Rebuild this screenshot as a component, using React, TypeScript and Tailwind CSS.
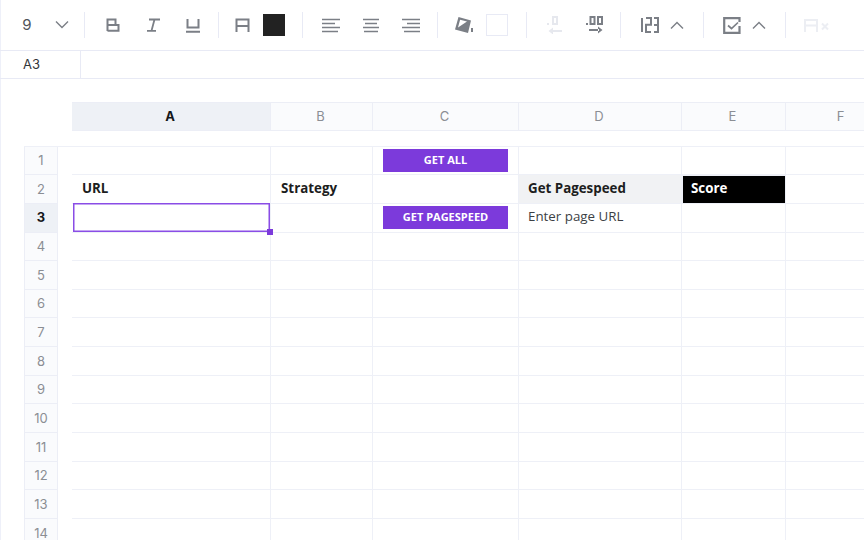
import type { ReactNode } from 'react';

const columns = [
  { name: 'A', width: 'w-[199px]' },
  { name: 'B', width: 'w-[102px]' },
  { name: 'C', width: 'w-[146px]' },
  { name: 'D', width: 'w-[163px]' },
  { name: 'E', width: 'w-[104px]' },
  { name: 'F', width: 'w-[112px]' },
];

const rows = Array.from({ length: 14 }, (_, i) => i + 1);

function Icon({ children, w = 18, h = 18, className = 'text-[#7b7f86]' }: { children: ReactNode; w?: number; h?: number; className?: string }) {
  return (
    <svg width={w} height={h} viewBox={`0 0 ${w} ${h}`} fill="none" stroke="currentColor" strokeWidth="2" className={className}>
      {children}
    </svg>
  );
}

function Divider({ left }: { left: string }) {
  return <div className={`h-[26px] w-px bg-[#e8eaf5] ${left}`} />;
}

function Tool({ children, width = 'w-10' }: { children: ReactNode; width?: string }) {
  return <div className={`flex h-6 items-center justify-center ${width}`}>{children}</div>;
}

function Chevron({ up = false }: { up?: boolean }) {
  return (
    <Icon w={14} h={8} className="text-[#7b7f86]">
      <path d={up ? 'M1 7.500 7 1.500l6 6' : 'M1 .5l6 6 6-6'} strokeWidth="1.400" />
    </Icon>
  );
}

function Toolbar() {
  return (
    <div className="flex h-[51px] items-center border-b border-[#e8eaf5] font-['Inter',sans-serif]">
      <div className="w-[54px] text-center text-[15px] text-[#50545a]">9</div>
      <Tool width="w-4"><Chevron /></Tool>
      <Divider left="ml-[14px]" />
      <Tool width="ml-2 w-10">
        <Icon w={14} h={14}><path d="M1.500 13V1.500h8v5.500M1.500 7h11v5.800H1.500" /></Icon>
      </Tool>
      <Tool>
        <Icon w={15} h={14}><path d="M3 1.500h11M1 12.800h9M8.500 1.500 5.500 12.800" strokeWidth="1.800" /></Icon>
      </Tool>
      <Tool>
        <Icon w={14} h={15}><path d="M1.500 1v8.500h11V1M0 13.800h14" /></Icon>
      </Tool>
      <Divider left="ml-[5px]" />
      <Tool width="ml-[3px] w-10">
        <Icon w={15} h={14}><path d="M1.500 14V1.500h12V14M1.500 8h12" /></Icon>
      </Tool>
      <div className="ml-px h-[22px] w-[22px] bg-[#222222]" />
      <Divider left="ml-[17px]" />
      <Tool width="ml-[8px] w-10">
        <Icon w={18} h={15}><path d="M0 1.500h18M0 5.500h13M0 9.500h18M0 13.500h16" strokeWidth="1.700" /></Icon>
      </Tool>
      <Tool>
        <Icon w={18} h={15}><path d="M1 1.500h16M3 5.500h12M1 9.500h16M2 13.500h14" strokeWidth="1.700" /></Icon>
      </Tool>
      <Tool>
        <Icon w={18} h={15}><path d="M0 1.500h18M5 5.500h13M0 9.500h18M2 13.500h16" strokeWidth="1.700" /></Icon>
      </Tool>
      <Divider left="ml-[6px]" />
      <Tool width="ml-[6px] w-10">
        <svg width="19" height="17" viewBox="0 0 19 17" className="text-[#7b7f86]" fill="currentColor">
          <path fillRule="evenodd" d="M3.500 0 16 3.500 13 16 0 12.500 3.500 0Zm1.600 2.800L3 10.600l9-6-6.900-1.800Z" />
          <rect x="16" y="11" width="2" height="4" />
        </svg>
      </Tool>
      <div className="ml-[2px] h-[22px] w-[22px] border border-[#e8eaf5] bg-white" />
      <Divider left="ml-[18px]" />
      <Tool width="ml-[8px] w-10">
        <svg width="18" height="18" viewBox="0 0 18 18" className="text-[#e6e8ee]" fill="currentColor">
          <rect x="1" y="7" width="2" height="2" />
          <path fillRule="evenodd" d="M6 0h6v9H6V0Zm2 2v5h2V2H8Z" />
          <path d="M4 14h12v2H4zM7 11.500v7L2.500 15 7 11.500Z" />
        </svg>
      </Tool>
      <Tool>
        <svg width="18" height="18" viewBox="0 0 18 18" className="text-[#7b7f86]" fill="currentColor">
          <rect x="0" y="7" width="2" height="2" />
          <path fillRule="evenodd" d="M3.500 0h6v9h-6V0Zm2 2v5h2V2h-2ZM11 0h6v9h-6V0Zm2 2v5h2V2h-2Z" />
          <path d="M3 13h10v2H3zM12 10.500v7l4.500-3.500-4.500-3.500Z" />
        </svg>
      </Tool>
      <Divider left="ml-[5px]" />
      <Tool width="ml-[9px] w-10">
        <Icon w={18} h={16}>
          <path d="M1 1v14M5 1h5v6.800H5V15h5M13 1h4v14h-4M13 8h4" strokeWidth="2" />
        </Icon>
      </Tool>
      <Tool width="w-[14px]"><Chevron up /></Tool>
      <Divider left="ml-[19px]" />
      <Tool width="ml-[8px] w-10">
        <Icon w={18} h={17}>
          <path d="M16.500 5V1.200H1.200v14.600h15.300V9" strokeWidth="2.200" />
          <path d="M5 8.500l3.500 3L15 5.500" strokeWidth="1.700" />
        </Icon>
      </Tool>
      <Tool width="w-[14px]"><Chevron up /></Tool>
      <Divider left="ml-[19px]" />
      <Tool width="ml-[11px] w-10">
        <Icon w={26} h={13} className="text-[#eceef3]">
          <path d="M1 13V1h12v12M1 6.500h12" />
          <path d="M18 4.500l6 6M24 4.500l-6 6" />
        </Icon>
      </Tool>
    </div>
  );
}

function FormulaBar() {
  return (
    <div className="flex h-[28px] border-b border-[#e8eaf5]">
      <div className="flex w-[81px] items-center border-r border-[#e8eaf5] pl-[23px] font-['Inter',sans-serif] text-[13px] text-[#33363b]">
        A3
      </div>
    </div>
  );
}

function ColumnHeaders() {
  return (
    <div className="ml-[72px] mt-[23px] flex h-[29px] w-max border-y border-[#eceef6]">
      {columns.map((col, i) => (
        <div
          key={col.name}
          className={`flex items-center justify-center border-r border-[#eceef6] pr-[2px] font-['Inter',sans-serif] text-[13px] ${col.width} ${
            i === 0 ? 'bg-[#eef1f6] font-bold text-[#15171a]' : 'bg-[#fafbfd] text-[#8b8e94]'
          }`}
        >
          {col.name}
        </div>
      ))}
    </div>
  );
}

function SheetButton({ label }: { label: string }) {
  return (
    <div className="flex h-[23px] w-[125px] items-center justify-center bg-[#7c3adb] text-[11px] font-bold text-white">
      {label}
    </div>
  );
}

function Cell({ col, className = '', children }: { col: number; className?: string; children?: ReactNode }) {
  return (
    <div className={`flex items-center border-r border-b border-[#eef0f7] ${columns[col].width} ${className}`}>
      {children}
    </div>
  );
}

function Row({ n }: { n: number }) {
  const bold = 'pb-px font-bold text-[#1c1d20]';
  return (
    <div className={`flex ${n === 1 ? 'h-[28.2px]' : 'h-[28.67px]'}`}>
      <div
        className={`flex w-[34px] items-center justify-center border-x border-b border-[#eceef6] pt-px font-['Inter',sans-serif] text-[13px] ${
          n === 3 ? 'bg-[#eef1f6] font-bold text-[#15171a]' : 'bg-[#fafbfd] text-[#8b8e94]'
        }`}
      >
        {n}
      </div>
      <div className="ml-[14px] flex font-['Open_Sans',sans-serif] text-[13.33px]">
        <Cell col={0} className={n === 2 ? `pl-[10px] ${bold}` : n === 3 ? 'relative' : ''}>
          {n === 2 && 'URL'}
          {n === 3 && (
            <>
              <div className="absolute -top-px bottom-0 left-px right-0 shadow-[inset_0_0_0_1.5px_#8a4de6]" />
              <div className="absolute -bottom-[3px] -right-[3px] h-[6px] w-[6px] bg-[#7c3adb]" />
            </>
          )}
        </Cell>
        <Cell col={1} className={n === 2 ? `pl-[10px] ${bold}` : ''}>{n === 2 && 'Strategy'}</Cell>
        <Cell col={2} className="pl-[10px]">
          {n === 1 && <SheetButton label="GET ALL" />}
          {n === 3 && <SheetButton label="GET PAGESPEED" />}
        </Cell>
        <Cell col={3} className={n === 2 ? `bg-[#f1f2f4] pl-[9px] ${bold}` : 'pb-px pl-[9px] text-[#3c3f44]'}>
          {n === 2 && 'Get Pagespeed'}
          {n === 3 && 'Enter page URL'}
        </Cell>
        <Cell col={4} className={n === 2 ? 'border border-[#5e6066] bg-black pb-px pl-[8px] font-bold text-white' : ''}>
          {n === 2 && 'Score'}
        </Cell>
        <Cell col={5} />
      </div>
    </div>
  );
}

export default function App() {
  return (
    <div className="h-[540px] w-[864px] overflow-hidden bg-white shadow-[inset_1px_0_0_#eef0f9]">
      <Toolbar />
      <FormulaBar />
      <ColumnHeaders />
      <div className="ml-[24px] mt-[15px] w-max border-t border-[#eef0f7]">
        {rows.map((n) => (
          <Row key={n} n={n} />
        ))}
      </div>
    </div>
  );
}
